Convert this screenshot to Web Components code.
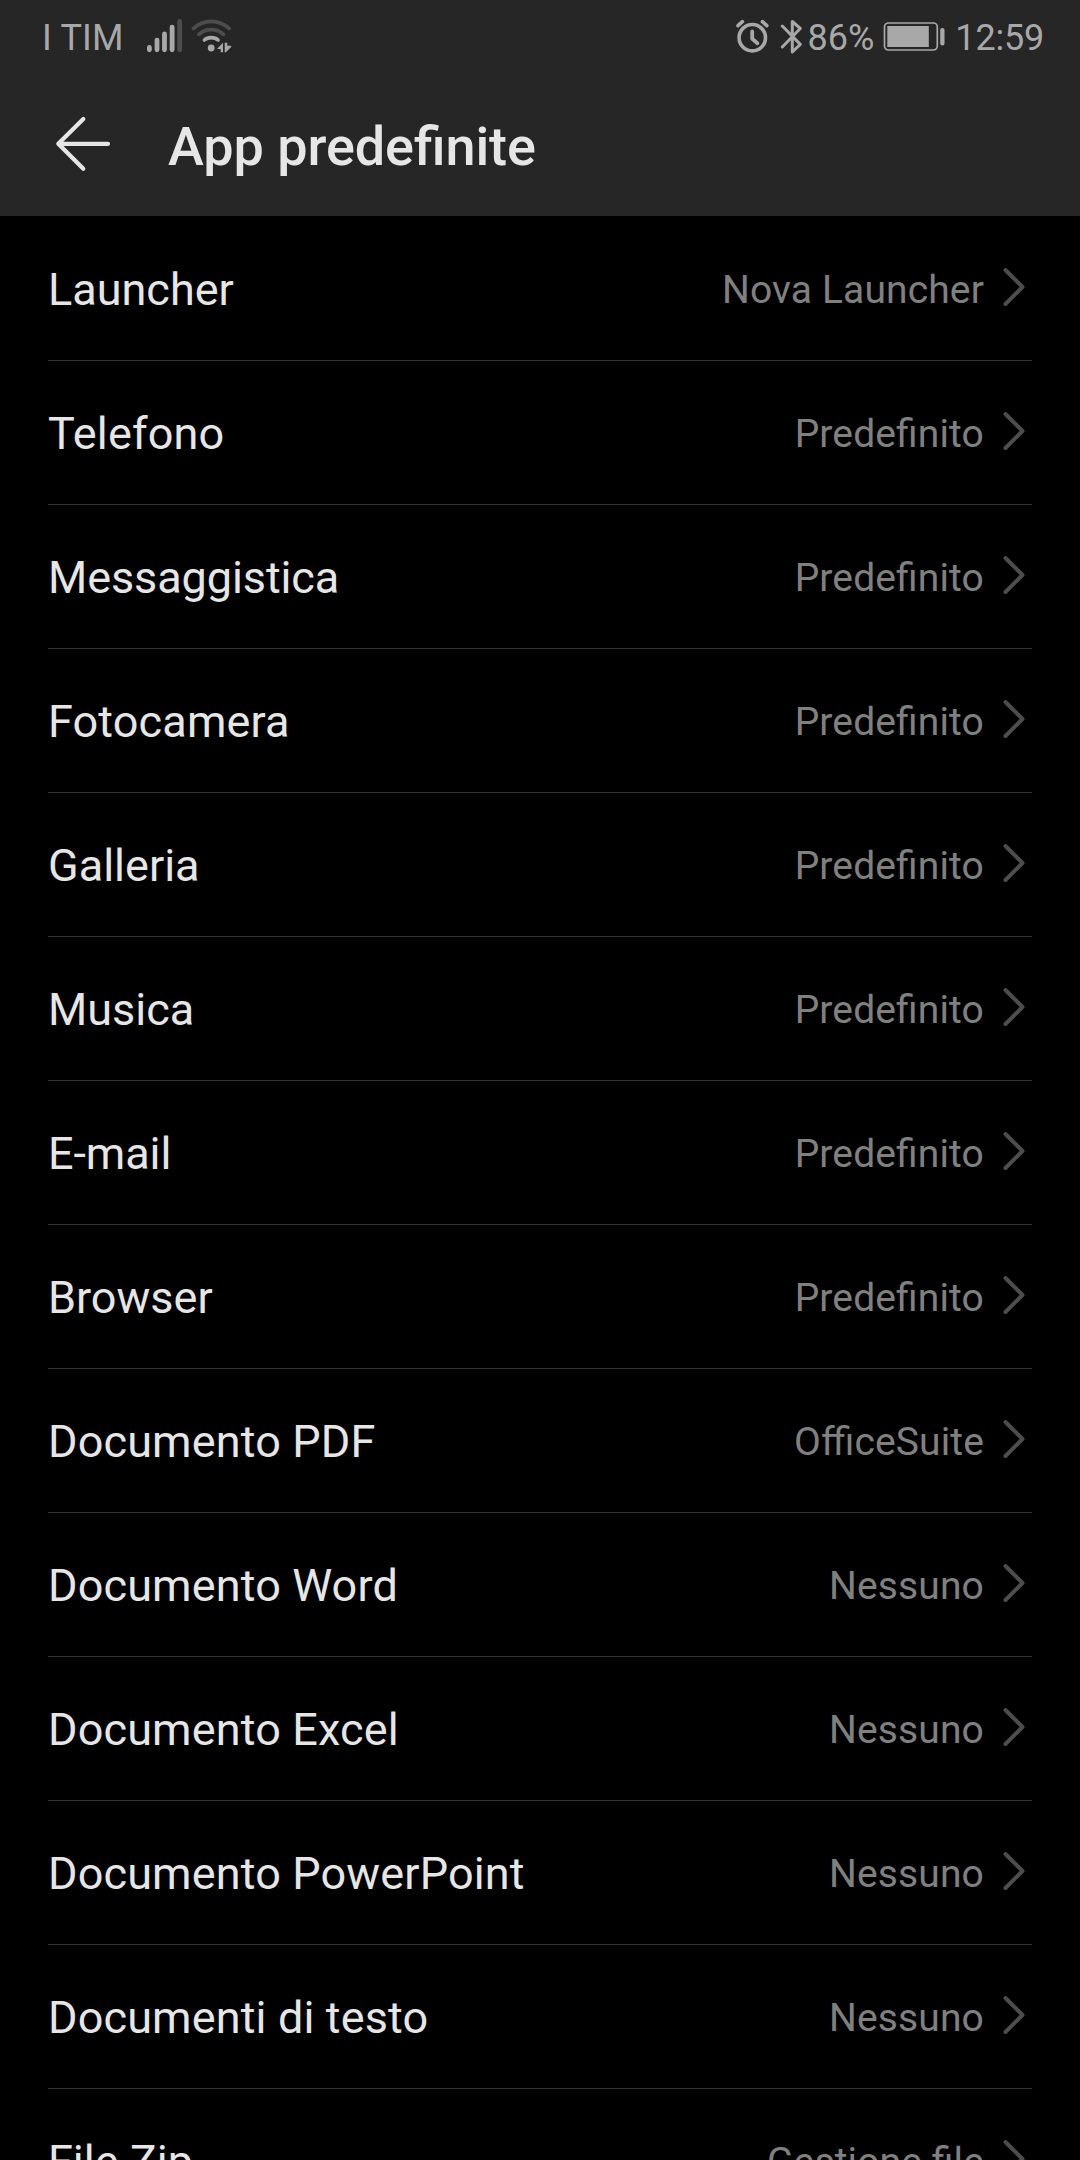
<!DOCTYPE html>
<html lang="it">
<head>
<meta charset="utf-8">
<title>App predefinite</title>
<style>
    body {
        margin: 0;
        height: 2160px;
        overflow: hidden;
        background: #000;
        font-family: Roboto, "Liberation Sans", sans-serif;
        font-feature-settings: "liga" 1;
    }
</style>
</head>
<body>

<template id="status-bar-template">
    <style>
        :host {
            display: flex;
            align-items: center;
            box-sizing: border-box;
            height: 75px;
            padding: 0 36px 0 42px;
            color: #a8a8a8;
            font-size: 36px;
            line-height: 42px;
        }

        ::slotted(span) {
            padding-top: 1px;
        }

        ::slotted([slot="carrier"]) {
            letter-spacing: .2px;
        }

        ::slotted([slot="clock"]) {
            letter-spacing: -.2px;
        }

        svg {
            display: block;
            flex: none;
        }

        .signal {
            margin-left: 23px;
        }

        .wifi {
            margin-left: 8px;
        }

        .alarm {
            margin-left: auto;
        }

        .bluetooth {
            margin: 0 6px 0 10px;
        }

        .battery {
            margin: 0 10px 0 9px;
        }
    </style>
    <slot name="carrier"></slot>
    <svg class="signal" width="36" height="75" viewBox="147 0 36 75" fill="none" stroke="currentColor" stroke-width="4.8" stroke-linecap="round">
        <path d="M149.4 47.4v2.4M157 40.2v9.6M164.5 34v15.8M172.1 27.2v22.6"/>
        <path d="M179.7 21.4v28.4" stroke="#4d4d4d"/>
    </svg>
    <svg class="wifi" width="42" height="75" viewBox="191 0 42 75" fill="none" stroke="currentColor" stroke-width="3.7" stroke-linecap="round">
        <path d="M193.5 28.4Q201 21.3 211.2 21.3T229 28.4M199 34.4Q204 29.6 211.2 29.6T223.4 34.4" stroke="#4d4d4d"/>
        <path d="M204.4 40Q207 37.6 211.2 37.6T218 40"/>
        <circle cx="211.2" cy="48" r="3.4" fill="currentColor" stroke="none"/>
        <path d="M217 48.7l6-6v9.6h-2.3v-3zM224.7 42.7h2.6v3h3.9v1.3l-5.3 5.3h-1.2z" fill="currentColor" stroke="none"/>
    </svg>
    <svg class="alarm" width="34" height="75" viewBox="736 0 34 75" fill="none" stroke="currentColor" stroke-width="3.6" stroke-linecap="round">
        <circle cx="752.3" cy="37.7" r="13.2"/>
        <path d="M752.2 31.5v7.3l5.2 4.5" stroke-width="3.8" stroke-linejoin="round"/>
        <path d="M738 25.7l4.4-4M766.8 25.7l-4.4-4"/>
    </svg>
    <svg class="bluetooth" width="22" height="75" viewBox="780 0 22 75" fill="none" stroke="currentColor" stroke-width="3" stroke-linecap="round" stroke-linejoin="round">
        <path d="M782.3 26l18 18.4-8 7.6V21.5l8 7-18 18.5"/>
    </svg>
    <slot name="charge"></slot>
    <svg class="battery" width="62" height="75" viewBox="883 0 62 75">
        <rect x="884.5" y="23" width="52.8" height="27" rx="4" fill="none" stroke="currentColor" stroke-width="1.7"/>
        <rect x="887.3" y="26" width="41.5" height="21" fill="currentColor"/>
        <rect x="940.2" y="28" width="4.3" height="17.5" rx="2" fill="currentColor"/>
    </svg>
    <slot name="clock"></slot>
</template>

<template id="title-bar-template">
    <style>
        :host {
            display: flex;
            align-items: center;
            box-sizing: border-box;
            height: 141px;
            padding-left: 54px;
            color: #e6e6e6;
        }

        svg {
            display: block;
            margin-right: 56px;
        }

        h1 {
            margin: 2px 0 0;
            font-size: 54px;
            font-weight: 500;
            line-height: 64px;
            letter-spacing: -.08px;
        }
    </style>
    <svg width="58" height="141" viewBox="54 75 58 141" fill="none" stroke="currentColor" stroke-width="4.2" stroke-linecap="round" stroke-linejoin="round">
        <path d="M83.3 119l-25 24.8 25 25M59 143.8h49"/>
    </svg>
    <h1><slot></slot></h1>
</template>

<template id="app-row-template">
    <style>
        :host {
            display: flex;
            align-items: center;
            box-sizing: border-box;
            height: 144px;
            padding-right: 6px;
            border-bottom: 1px solid #333;
            color: #e6e6e6;
            font-size: 45px;
            line-height: 53px;
            white-space: nowrap;
        }

        .label {
            padding-top: 2px;
        }

        .value {
            margin-left: auto;
            padding-top: 3px;
            color: #808080;
            font-size: 39px;
            line-height: 46px;
            letter-spacing: .13px;
        }

        svg {
            display: block;
            margin-left: 18px;
        }
    </style>
    <span class="label"><slot></slot></span>
    <span class="value"></span>
    <svg width="24" height="143" viewBox="0 0 24 143" fill="none" stroke="#4d4d4d" stroke-width="4" stroke-linecap="round" stroke-linejoin="round">
        <path d="M3.5 53l17 17-17 17"/>
    </svg>
</template>

<template id="app-list-template">
    <style>
        :host {
            display: block;
            padding: 1px 48px 0;
        }

        ::slotted(.wide) {
            letter-spacing: .14px;
        }

        ::slotted(.tight) {
            letter-spacing: -.1px;
        }
    </style>
    <slot></slot>
</template>

<template id="top-panel-template">
    <style>
        :host {
            display: block;
            background: #262626;
        }
    </style>
    <slot></slot>
</template>

<top-panel>
    <status-bar>
        <span slot="carrier">I TIM</span>
        <span slot="charge">86%</span>
        <span slot="clock">12:59</span>
    </status-bar>
    <title-bar>App predefinite</title-bar>
</top-panel>
<app-list>
    <app-row value="Nova Launcher">Launcher</app-row>
    <app-row class="wide" value="Predefinito">Telefono</app-row>
    <app-row class="tight" value="Predefinito">Messaggistica</app-row>
    <app-row class="wide" value="Predefinito">Fotocamera</app-row>
    <app-row value="Predefinito">Galleria</app-row>
    <app-row value="Predefinito">Musica</app-row>
    <app-row class="tight" value="Predefinito">E-mail</app-row>
    <app-row value="Predefinito">Browser</app-row>
    <app-row class="wide" value="OfficeSuite">Documento PDF</app-row>
    <app-row class="wide" value="Nessuno">Documento Word</app-row>
    <app-row class="wide" value="Nessuno">Documento Excel</app-row>
    <app-row class="wide" value="Nessuno">Documento PowerPoint</app-row>
    <app-row class="wide" value="Nessuno">Documenti di testo</app-row>
    <app-row value="Gestione file">File Zip</app-row>
</app-list>

<script>
    (function(window, document) {

        // Base class, clones the template with the given id into the shadow root.
        class TemplateElement extends HTMLElement {

            constructor(templateId) {
                super();

                const template = document.getElementById(templateId).content;
                const shadowRoot = this.attachShadow({mode: 'open'});
                shadowRoot.appendChild(document.importNode(template, true));
            }

        }

        class TopPanel extends TemplateElement {
            constructor() {
                super('top-panel-template');
            }
        }

        class StatusBar extends TemplateElement {
            constructor() {
                super('status-bar-template');
            }
        }

        class TitleBar extends TemplateElement {
            constructor() {
                super('title-bar-template');
            }
        }

        class AppList extends TemplateElement {
            constructor() {
                super('app-list-template');
            }
        }

        class AppRow extends TemplateElement {

            constructor() {
                super('app-row-template');
            }

            connectedCallback() {
                this.shadowRoot.querySelector('.value').textContent = this.getAttribute('value');
            }

        }

        window.customElements.define('top-panel', TopPanel);
        window.customElements.define('status-bar', StatusBar);
        window.customElements.define('title-bar', TitleBar);
        window.customElements.define('app-list', AppList);
        window.customElements.define('app-row', AppRow);
    })(window, document);
</script>
</body>
</html>
